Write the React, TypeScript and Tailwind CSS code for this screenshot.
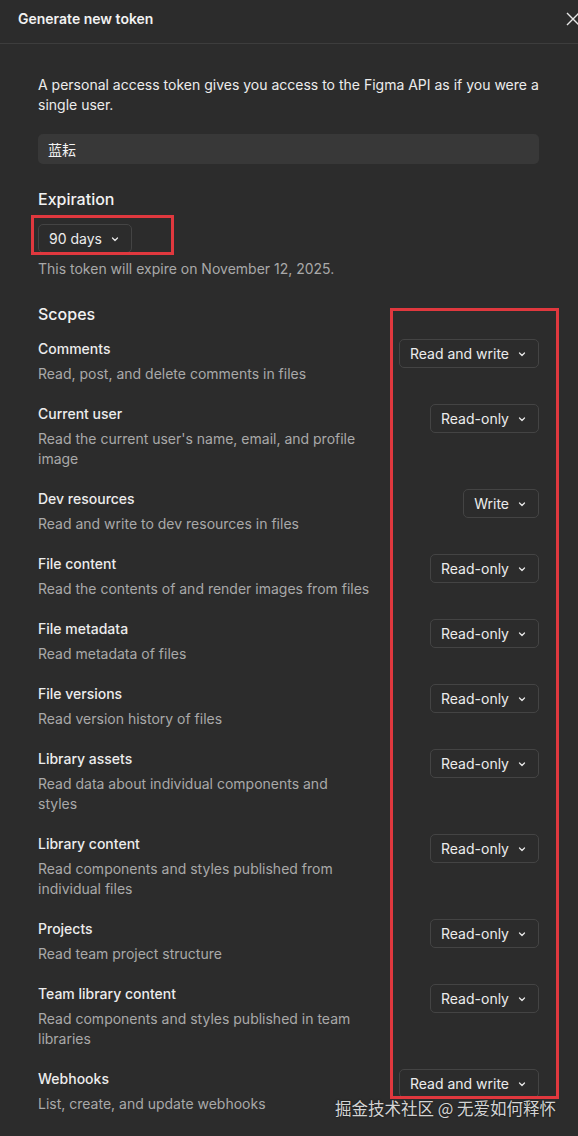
import type { ReactNode } from "react";

type Access = "Read and write" | "Read-only" | "Write";

type Scope = {
  name: string;
  description: string;
  access: Access;
};

const scopes: Scope[] = [
  { name: "Comments", description: "Read, post, and delete comments in files", access: "Read and write" },
  { name: "Current user", description: "Read the current user's name, email, and profile image", access: "Read-only" },
  { name: "Dev resources", description: "Read and write to dev resources in files", access: "Write" },
  { name: "File content", description: "Read the contents of and render images from files", access: "Read-only" },
  { name: "File metadata", description: "Read metadata of files", access: "Read-only" },
  { name: "File versions", description: "Read version history of files", access: "Read-only" },
  { name: "Library assets", description: "Read data about individual components and styles", access: "Read-only" },
  { name: "Library content", description: "Read components and styles published from individual files", access: "Read-only" },
  { name: "Projects", description: "Read team project structure", access: "Read-only" },
  { name: "Team library content", description: "Read components and styles published in team libraries", access: "Read-only" },
  { name: "Webhooks", description: "List, create, and update webhooks", access: "Read and write" },
];

function Chevron() {
  return (
    <svg width="8" height="8" viewBox="0 0 8 8" fill="none" className="shrink-0">
      <path d="M1.5 3L4 5.5L6.5 3" stroke="#e6e6e6" strokeWidth="1.3" strokeLinecap="round" strokeLinejoin="round" />
    </svg>
  );
}

function Select({ children }: { children: ReactNode }) {
  return (
    <button className="inline-flex h-[29px] shrink-0 items-center gap-[9px] rounded-[5px] border border-[#444444] pl-[10px] pr-[12px] text-[14px] text-[#ececec]">
      <span>{children}</span>
      <Chevron />
    </button>
  );
}

function ScopeRow({ scope }: { scope: Scope }) {
  return (
    <li className="flex items-start justify-between">
      <div className="w-[332px]">
        <div className="text-[14px] leading-5 font-medium text-[#ececec]">{scope.name}</div>
        <p className="mt-[5px] text-[14px] leading-5 text-[#a9a9a9]">{scope.description}</p>
      </div>
      <Select>{scope.access}</Select>
    </li>
  );
}

export default function App() {
  return (
    <div
      className="relative h-[1136px] w-[578px] overflow-hidden bg-[#2c2c2c] antialiased"
      style={{ fontFamily: "Inter, 'Noto Sans CJK SC', sans-serif" }}
    >
      <header className="flex h-[44px] items-start justify-between border-b border-[#3d3d3d] pl-[18px] pt-[9px]">
        <h2 className="text-[14px] leading-5 font-semibold text-[#f2f2f2]">Generate new token</h2>
        <svg width="14" height="14" viewBox="0 0 14 14" className="-mr-[2px] mt-[3px]">
          <path d="M1 1L13 13M13 1L1 13" stroke="#e6e6e6" strokeWidth="1.4" />
        </svg>
      </header>

      <main className="pl-[38px] pr-[39px] pt-[31px]">
        <p className="text-[14px] leading-5 text-[#ececec]">
          A personal access token gives you access to the Figma API as if you were a single user.
        </p>

        <div className="mt-[19px] flex h-[30px] items-center rounded-[5px] bg-[#383838] px-[10px] text-[14px] text-[#f2f2f2]">
          蓝耘
        </div>

        <h3 className="mt-[23px] text-[16px] leading-6 font-medium text-[#f2f2f2]">Expiration</h3>
        <div className="mt-[13px]">
          <Select>90 days</Select>
        </div>
        <p className="mt-[6px] text-[14px] leading-5 text-[#a9a9a9]">This token will expire on November 12, 2025.</p>

        <h3 className="mt-[23px] text-[16px] leading-6 font-medium text-[#f2f2f2]">Scopes</h3>
        <ul className="mt-[13px] flex flex-col gap-5">
          {scopes.map((scope) => (
            <ScopeRow key={scope.name} scope={scope} />
          ))}
        </ul>
      </main>

      {/* highlight frames */}
      <div className="pointer-events-none absolute left-[31px] top-[215px] h-[40px] w-[143px] border-[3px] border-[#e0383e]" />
      <div className="pointer-events-none absolute left-[390px] top-[308px] h-[791px] w-[169px] border-[3px] border-[#e0383e]" />

      <div
        className="pointer-events-none absolute left-[335px] top-[1096px] text-[16.5px] leading-6 text-[#d4d4d4] [text-shadow:0_0_2px_rgba(0,0,0,0.6)]"
        style={{ fontFamily: "'Noto Sans CJK SC', sans-serif" }}
      >
        掘金技术社区 @ 无爱如何释怀
      </div>
    </div>
  );
}
